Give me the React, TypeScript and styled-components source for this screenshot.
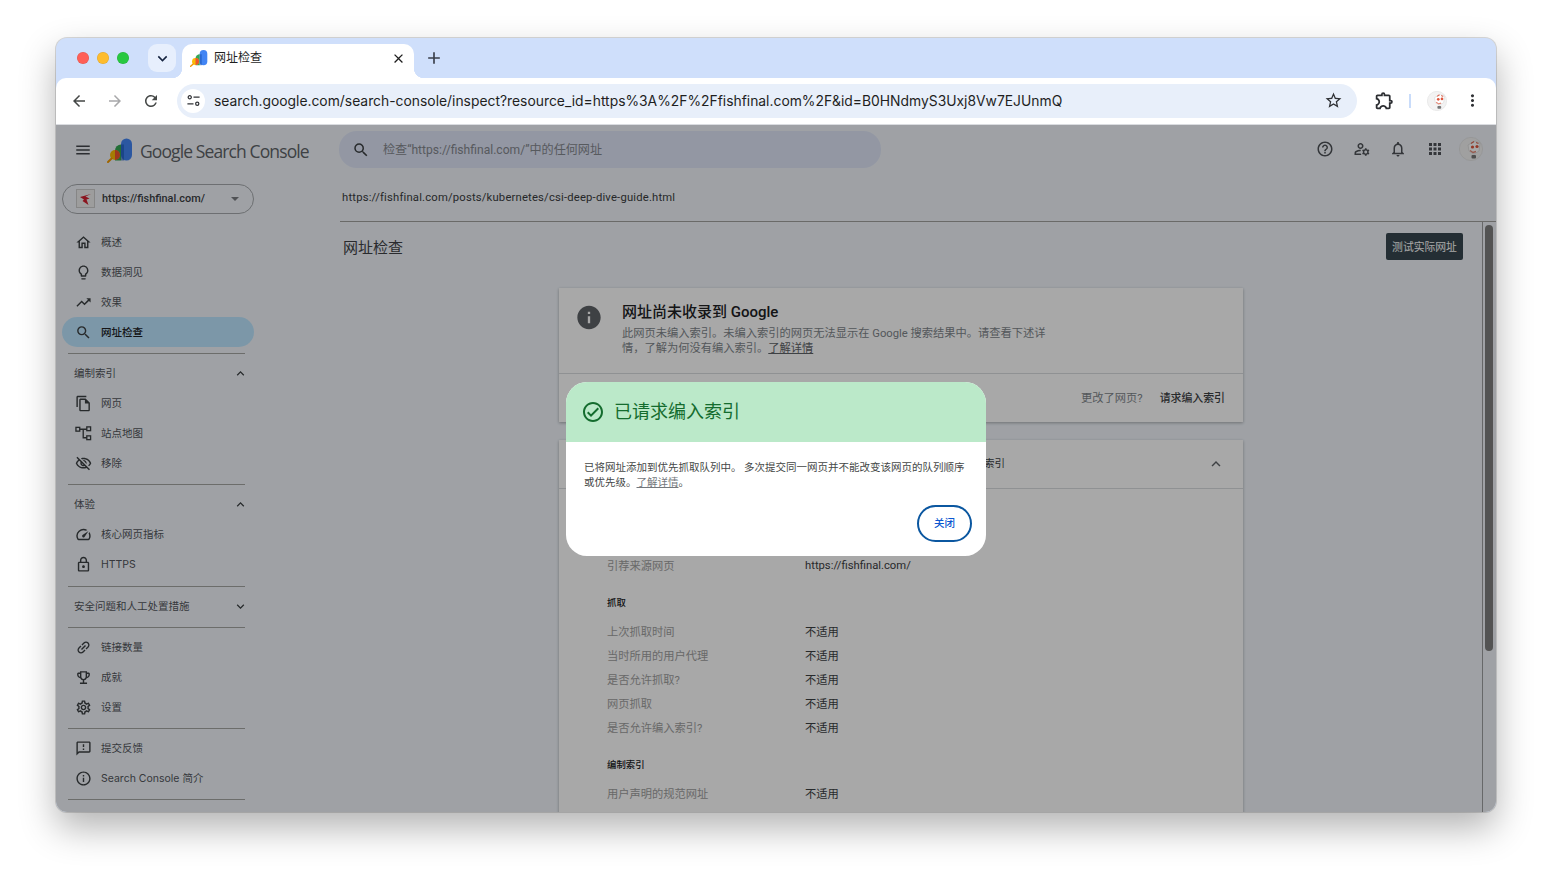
import React from 'react'
import styled, { createGlobalStyle } from 'styled-components'
import {
  MdAdd,
  MdApps,
  MdArrowBack,
  MdArrowForward,
  MdClose,
  MdExpandMore,
  MdHelpOutline,
  MdInfo,
  MdInfoOutline,
  MdKeyboardArrowDown,
  MdKeyboardArrowUp,
  MdLightbulbOutline,
  MdLink,
  MdMenu,
  MdMoreVert,
  MdOutlineCheckCircle,
  MdOutlineEmojiEvents,
  MdOutlineExtension,
  MdOutlineFeedback,
  MdOutlineFileCopy,
  MdOutlineHome,
  MdOutlineLock,
  MdOutlineManageAccounts,
  MdOutlineNotifications,
  MdOutlineSettings,
  MdOutlineSpeed,
  MdOutlineVisibilityOff,
  MdRefresh,
  MdSearch,
  MdStarBorder,
  MdTrendingUp,
} from 'react-icons/md'

const cjk = '"Roboto", "Noto Sans CJK SC", sans-serif'
const uiFont = '"Inter", "Noto Sans CJK SC", sans-serif'

const GlobalStyle = createGlobalStyle`
  html, body {
    margin: 0;
    padding: 0;
    height: 100%;
    background: #ffffff;
    overflow: hidden;
  }
  * { box-sizing: border-box; }
`

const Desktop = styled.div`
  width: 1552px;
  height: 886px;
  padding: 38px 56px 74px;
  background: #fff;
`

const Browser = styled.div`
  width: 1440px;
  height: 774px;
  display: flex;
  flex-direction: column;
  overflow: hidden;
  border-radius: 11px;
  background: #cfdffb;
  box-shadow: 0 0 0 1px rgba(0, 0, 0, 0.14), 0 16px 36px rgba(0, 0, 0, 0.3);
`

const TabStrip = styled.div`
  height: 40px;
  flex: none;
  display: flex;
  align-items: flex-end;
  padding-left: 21px;
`

const Lights = styled.div`
  display: flex;
  gap: 8px;
  align-self: flex-start;
  margin-top: 14px;
`

const Light = styled.span<{ $color: string }>`
  width: 12px;
  height: 12px;
  border-radius: 50%;
  background: ${p => p.$color};
  box-shadow: inset 0 0 0 0.5px rgba(0, 0, 0, 0.12);
`

const TabListButton = styled.div`
  width: 28px;
  height: 28px;
  margin: 0 6px 6px 19px;
  border-radius: 9px;
  background: #e7effd;
  color: #15233f;
  display: flex;
  align-items: center;
  justify-content: center;
  font-size: 19px;
`

const Tab = styled.div`
  position: relative;
  width: 232px;
  height: 34px;
  display: flex;
  align-items: center;
  padding: 0 8px 6px 8px;
  background: #fff;
  border-radius: 10px 10px 0 0;
  color: #1f1f1f;
  font: 12px/16px ${uiFont};

  &::before,
  &::after {
    content: '';
    position: absolute;
    bottom: 0;
    width: 10px;
    height: 10px;
  }
  &::before {
    left: -10px;
    background: radial-gradient(circle at 0 0, transparent 10px, #fff 10.5px);
  }
  &::after {
    right: -10px;
    background: radial-gradient(circle at 100% 0, transparent 10px, #fff 10.5px);
  }
`

const TabTitle = styled.span`
  flex: 1;
  margin-left: 6px;
`

const TabClose = styled.span`
  display: flex;
  color: #1f1f1f;
  font-size: 15px;
`

const NewTab = styled.div`
  margin: 0 0 10px 10px;
  display: flex;
  color: #3a3f4a;
  font-size: 20px;
`

const Toolbar = styled.div`
  position: relative;
  height: 47px;
  flex: none;
  display: flex;
  align-items: center;
  padding: 0 0 1px 14px;
  background: #fff;
  border-bottom: 1px solid #dadce0;
  border-radius: 10px 10px 0 0;
`

const NavButton = styled.span<{ $dim?: boolean }>`
  width: 18px;
  margin-right: 18px;
  display: flex;
  justify-content: center;
  color: ${p => (p.$dim ? '#a8a8aa' : '#444746')};
  font-size: 18px;
`

const Omnibox = styled.div`
  width: 1180px;
  height: 34px;
  margin-left: -1px;
  display: flex;
  align-items: center;
  padding: 0 14px 0 1px;
  border-radius: 17px;
  background: #e8effa;
`

const SiteInfo = styled.span`
  width: 24px;
  height: 24px;
  margin-left: 3px;
  border-radius: 50%;
  background: #fff;
  display: flex;
  align-items: center;
  justify-content: center;
`

const UrlText = styled.span`
  flex: 1;
  margin-left: 9px;
  color: #1f1f1f;
  font: 13.87px ${uiFont};
  white-space: nowrap;
`

const Star = styled.span`
  display: flex;
  color: #303236;
  font-size: 19px;
`

const ToolIcon = styled.span`
  margin-left: 17px;
  display: flex;
  color: #2b2d31;
  font-size: 21px;
`

const ToolSep = styled.span`
  width: 2px;
  height: 14px;
  margin: 0 16px 0 14px;
  background: #c9dcfa;
`

const MenuIcon = styled.span`
  margin-left: 16px;
  display: flex;
  color: #303236;
  font-size: 19px;
`

const Content = styled.div`
  position: relative;
  flex: 1;
  min-height: 0;
  display: flex;
  flex-direction: column;
  background: #f1f5fb;
  overflow: hidden;
`

const TopBar = styled.header`
  height: 50px;
  flex: none;
  display: flex;
  align-items: center;
  padding: 0 0 1px 18px;
`

const Burger = styled.span`
  display: flex;
  color: #43474c;
  font-size: 18px;
`

const Logo = styled.span`
  width: 26px;
  height: 26px;
  margin-left: 15px;
  flex: none;
`

const Brand = styled.span`
  width: 199px;
  margin-left: 7px;
  padding-top: 5px;
  color: #5f6368;
  font: 17.5px/1 "Open Sans", sans-serif;
  letter-spacing: -0.89px;
  white-space: nowrap;
`

const SearchBar = styled.div`
  width: 542px;
  height: 37px;
  display: flex;
  align-items: center;
  padding-left: 13px;
  border-radius: 18px;
  background: #dfe6f8;
`

const SearchGlyph = styled.span`
  display: flex;
  color: #3c4043;
  font-size: 18px;
`

const SearchHint = styled.span`
  margin-left: 13px;
  color: #85898f;
  font: 12.1px/16px ${cjk};
`

const TopIcons = styled.div`
  margin-left: auto;
  display: flex;
  align-items: center;
  padding: 0 13px 1px 0;
`

const TopIcon = styled.span`
  width: 36.5px;
  display: flex;
  justify-content: center;
  color: #4f5358;
  font-size: 18px;
`

const AvatarFrame = styled.span<{ $size: number }>`
  width: ${p => p.$size}px;
  height: ${p => p.$size}px;
  display: block;
  flex: none;
  margin-left: ${p => (p.$size > 22 ? 6 : 0)}px;
`

const Body = styled.div`
  flex: 1;
  min-height: 0;
  display: flex;
`

const Sidebar = styled.nav`
  width: 284px;
  flex: none;
  padding: 9px 0 0 6px;
`

const PropertySelect = styled.div`
  width: 192px;
  height: 30px;
  display: flex;
  align-items: center;
  padding: 0 0 1px 13px;
  border: 1px solid #a6a9ad;
  border-radius: 15px;
  margin-bottom: 13px;
`

const SiteMark = styled.svg`
  width: 19px;
  height: 19px;
  flex: none;
`

const SiteName = styled.span`
  flex: 1;
  margin-left: 7px;
  color: #3c4043;
  font: 500 10.9px ${cjk};
`

const Caret = styled.span`
  width: 0;
  height: 0;
  margin: 1px 14px 0 0;
  border-left: 4px solid transparent;
  border-right: 4px solid transparent;
  border-top: 4px solid #7a7d82;
`

const NavRow = styled.div<{ $active?: boolean }>`
  width: 192px;
  height: 30px;
  display: flex;
  align-items: center;
  padding-left: 12px;
  border-radius: 15px;
  background: ${p => (p.$active ? '#bde6ff' : 'transparent')};
  color: ${p => (p.$active ? '#202124' : '#53565b')};
  font: ${p => (p.$active ? 500 : 400)} 10.5px/14px ${uiFont};
`

const NavIcon = styled.span`
  width: 18px;
  flex: none;
  display: flex;
  justify-content: center;
  margin-right: 9px;
  font-size: 17px;
  color: #3c4043;
`

const NavLabel = styled.span`
  padding-top: 2px;
`

const NavRule = styled.div<{ $wide?: boolean }>`
  width: 177px;
  height: 1px;
  margin: ${p => (p.$wide ? 7 : 6)}px 0 4px 6px;
  background: #a5a6a3;
`

const NavHeading = styled.div`
  width: 192px;
  height: 30px;
  display: flex;
  align-items: center;
  justify-content: space-between;
  padding: 0 6px 0 12px;
  color: #53565b;
  font: 10.5px/14px ${uiFont};

  svg {
    font-size: 15px;
    color: #3c4043;
  }
`

const Main = styled.main`
  flex: 1;
  min-width: 0;
  display: flex;
  flex-direction: column;
`

const Crumb = styled.div`
  height: 47px;
  flex: none;
  padding: 16px 0 0 2px;
  border-bottom: 1px solid #a1a29f;
  color: #3a3c40;
  font: 11.25px/14px ${cjk};
  letter-spacing: 0.19px;
`

const ScrollArea = styled.div`
  flex: 1;
  min-height: 0;
  display: flex;
`

const Page = styled.div`
  flex: 1;
  min-width: 0;
  overflow: hidden;
`

const TitleRow = styled.div`
  display: flex;
  align-items: center;
  justify-content: space-between;
  padding: 11px 19px 0 3px;
`

const PageTitle = styled.h1`
  margin: 0;
  color: #404246;
  font: 400 15px ${cjk};
`

const LiveTest = styled.button`
  width: 77px;
  height: 27px;
  padding: 0 0 2px;
  border: none;
  border-radius: 2px;
  background: #38474f;
  color: #fff;
  font: 10.8px ${cjk};
`

const Card = styled.section<{ $gap: number }>`
  width: 684px;
  margin: ${p => p.$gap}px 0 0 219px;
  background: #fff;
  box-shadow: 0 1px 3px rgba(0, 0, 0, 0.3);
`

const VerdictTop = styled.div`
  height: 86px;
  display: flex;
  padding: 14px 0 0 17px;
  border-bottom: 1px solid #dadce0;
`

const VerdictIcon = styled.span`
  width: 28px;
  margin: 0 19px 0 -1px;
  flex: none;
  display: flex;
  height: 30px;
  color: #5f6368;
  font-size: 31px;
`

const VerdictText = styled.div`
  width: 430px;
`

const VerdictTitle = styled.h2`
  margin: 0 0 4px;
  color: #202124;
  font: 500 15px/20px ${cjk};
`

const VerdictDesc = styled.p`
  margin: 0;
  color: #80868b;
  font: 11.25px/15px ${cjk};

  a {
    color: #5f6368;
    text-decoration: underline;
  }
`

const VerdictActions = styled.div`
  height: 48px;
  display: flex;
  align-items: center;
  justify-content: flex-end;
  gap: 17px;
  padding: 0 18px 2px 0;
  color: #80868b;
  font: 11.25px ${cjk};

  strong {
    color: #3c4043;
    font-weight: 500;
    font-size: 10.9px;
  }
`

const DetailHead = styled.div`
  height: 49px;
  display: flex;
  align-items: center;
  justify-content: space-between;
  padding-right: 18px;
  border-bottom: 1px solid #dadce0;
  color: #3c4043;
  font: 10.5px ${cjk};

  span {
    width: 446px;
    padding-bottom: 3px;
    text-align: right;
  }
  svg {
    font-size: 18px;
    color: #5f6368;
  }
`

const DetailBody = styled.div`
  padding: 10px 0 40px 48px;
`

const DetailSection = styled.div`
  margin-bottom: 12px;
`

const DetailLabel = styled.h3`
  height: 26px;
  margin: 0 0 4px;
  padding-top: 1px;
  color: #202124;
  font: 500 9.4px/26px ${cjk};
`

const DetailRow = styled.div`
  height: 24px;
  display: flex;
  align-items: center;
  font: 11.25px ${cjk};
`

const RowKey = styled.span`
  width: 198px;
  color: #9e9e9e;
`

const RowValue = styled.span`
  color: #3c4043;
`

const ScrollTrack = styled.div`
  width: 14px;
  flex: none;
  padding: 3px 3px 0 2px;
  border-left: 1px solid #9d9ea0;
`

const ScrollThumb = styled.div`
  height: 426px;
  border-radius: 4px;
  background: #7f7f7f;
`

const Scrim = styled.div`
  position: absolute;
  inset: 0;
  display: flex;
  align-items: center;
  justify-content: center;
  background: rgba(0, 0, 0, 0.34);
`

const Dialog = styled.div`
  width: 420px;
  height: 174px;
  display: flex;
  flex-direction: column;
  border-radius: 21px;
  overflow: hidden;
  background: #fff;
  font-family: ${cjk};
`

const DialogHead = styled.div`
  height: 60px;
  flex: none;
  display: flex;
  align-items: center;
  padding-left: 15px;
  background: #bbe9c9;
  color: #146c2e;
  font-size: 18px;
  line-height: 24px;

  svg {
    font-size: 24px;
    margin-right: 9px;
  }
`

const DialogBody = styled.p`
  margin: 18px 18px 0;
  color: #444746;
  font-size: 10.5px;
  line-height: 15px;

  a {
    color: #73777b;
    text-decoration: underline;
  }
`

const DialogActions = styled.div`
  margin-top: auto;
  display: flex;
  justify-content: flex-end;
  padding: 0 14px 14px 0;
`

const CloseButton = styled.button`
  width: 55px;
  height: 37px;
  padding: 0 0 2px;
  border: 2px solid #0b57a0;
  border-radius: 19px;
  background: #fff;
  color: #0b57d0;
  font: 500 10.5px ${cjk};
`

// no icon package has the Search Console logo, drawn from the zoomed crop
const GscLogo = () => (
  <svg viewBox="0 0 26 26" width="100%" height="100%">
    <rect x="14" y="1.5" width="11" height="22" rx="5.5" fill="#4285f4" />
    <path d="M14 7.5a6 6 0 0 0-6 6v10h6z" fill="#34a853" />
    <path d="M14 7.5h3v16h-3z" fill="#1a56b8" opacity="0.6" />
    <circle cx="8" cy="18" r="5" fill="#fbbc04" />
    <path d="M8 13a5 5 0 0 1 0 10z" fill="#ea4335" opacity="0.85" />
    <path d="M4.6 21.6 1 25" stroke="#f29900" strokeWidth="2" strokeLinecap="round" />
  </svg>
)

const CatAvatar = () => (
  <svg viewBox="0 0 24 24" width="100%" height="100%">
    <circle cx="12" cy="12" r="11.6" fill="#f3f3f3" stroke="#dcdcdc" strokeWidth="0.6" />
    <path d="M9 8l7-4 5 2-1 8-5 3-5-3z" fill="#fff" stroke="#c9c9c9" strokeWidth="0.5" />
    <circle cx="13.5" cy="10" r="1.6" fill="#e0553c" />
    <circle cx="18" cy="9.5" r="1.6" fill="#e0553c" />
    <path d="M12 6.5l3-2M17 5.5l2.5 1" stroke="#d96a55" strokeWidth="1.3" />
    <path d="M11 13.5l3 2 3-1" stroke="#e58a78" strokeWidth="1.4" fill="none" />
    <rect x="12.5" y="18" width="4.5" height="3.4" rx="1" fill="#777" />
  </svg>
)

const SiteInfoGlyph = () => (
  <svg viewBox="0 0 16 16" width="15" height="15" fill="none" stroke="#303236" strokeWidth="1.3">
    <circle cx="4" cy="4.5" r="1.7" />
    <path d="M8 4.5h6.5M1.5 11.5h6.5" />
    <circle cx="12" cy="11.5" r="1.7" />
  </svg>
)

const SitemapIcon = () => (
  <svg viewBox="0 0 18 18" width="17" height="17" fill="none" stroke="currentColor" strokeWidth="1.4">
    <rect x="1" y="2.5" width="4" height="4" />
    <rect x="12.5" y="2" width="4" height="4" />
    <rect x="12.5" y="11.5" width="4" height="4" />
    <path d="M5 4.5h7.5M8.7 4.5v9h3.8" />
  </svg>
)

const primaryNav = [
  { icon: <MdOutlineHome />, label: '概述' },
  { icon: <MdLightbulbOutline />, label: '数据洞见' },
  { icon: <MdTrendingUp />, label: '效果' },
  { icon: <MdSearch />, label: '网址检查', active: true },
]

const indexNav = [
  { icon: <MdOutlineFileCopy />, label: '网页' },
  { icon: <SitemapIcon />, label: '站点地图' },
  { icon: <MdOutlineVisibilityOff />, label: '移除' },
]

const experienceNav = [
  { icon: <MdOutlineSpeed />, label: '核心网页指标' },
  { icon: <MdOutlineLock />, label: 'HTTPS' },
]

const toolNav = [
  { icon: <MdLink style={{ transform: 'rotate(-45deg)' }} />, label: '链接数量' },
  { icon: <MdOutlineEmojiEvents />, label: '成就' },
  { icon: <MdOutlineSettings />, label: '设置' },
]

const helpNav = [
  { icon: <MdOutlineFeedback />, label: '提交反馈' },
  { icon: <MdInfoOutline />, label: 'Search Console 简介' },
]

type NavItem = { icon: React.ReactNode; label: string; active?: boolean }

const NavList = ({ items }: { items: NavItem[] }) => (
  <>
    {items.map(item => (
      <NavRow key={item.label} $active={item.active}>
        <NavIcon>{item.icon}</NavIcon>
        <NavLabel>{item.label}</NavLabel>
      </NavRow>
    ))}
  </>
)

const detailSections = [
  { title: '发现', rows: [['站点地图', '不适用'], ['引荐来源网页', 'https://fishfinal.com/']] },
  {
    title: '抓取',
    rows: [
      ['上次抓取时间', '不适用'],
      ['当时所用的用户代理', '不适用'],
      ['是否允许抓取?', '不适用'],
      ['网页抓取', '不适用'],
      ['是否允许编入索引?', '不适用'],
    ],
  },
  { title: '编制索引', rows: [['用户声明的规范网址', '不适用']] },
]

export default function App() {
  return (
    <Desktop>
      <GlobalStyle />
      <Browser>
        <TabStrip>
          <Lights>
            <Light $color="#ff5f57" />
            <Light $color="#febc2e" />
            <Light $color="#28c840" />
          </Lights>
          <TabListButton>
            <MdExpandMore />
          </TabListButton>
          <Tab>
            <AvatarFrame $size={18}>
              <GscLogo />
            </AvatarFrame>
            <TabTitle>网址检查</TabTitle>
            <TabClose>
              <MdClose />
            </TabClose>
          </Tab>
          <NewTab>
            <MdAdd />
          </NewTab>
        </TabStrip>
        <Toolbar>
          <NavButton>
            <MdArrowBack />
          </NavButton>
          <NavButton $dim>
            <MdArrowForward />
          </NavButton>
          <NavButton>
            <MdRefresh />
          </NavButton>
          <Omnibox>
            <SiteInfo>
              <SiteInfoGlyph />
            </SiteInfo>
            <UrlText>search.google.com/search-console/inspect?resource_id=https%3A%2F%2Ffishfinal.com%2F&amp;id=B0HNdmyS3Uxj8Vw7EJUnmQ</UrlText>
            <Star>
              <MdStarBorder />
            </Star>
          </Omnibox>
          <ToolIcon>
            <MdOutlineExtension />
          </ToolIcon>
          <ToolSep />
          <AvatarFrame $size={20}>
            <CatAvatar />
          </AvatarFrame>
          <MenuIcon>
            <MdMoreVert />
          </MenuIcon>
        </Toolbar>
        <Content>
          <TopBar>
            <Burger>
              <MdMenu />
            </Burger>
            <Logo>
              <GscLogo />
            </Logo>
            <Brand>Google Search Console</Brand>
            <SearchBar>
              <SearchGlyph>
                <MdSearch />
              </SearchGlyph>
              <SearchHint>检查“https://fishfinal.com/”中的任何网址</SearchHint>
            </SearchBar>
            <TopIcons>
              <TopIcon>
                <MdHelpOutline />
              </TopIcon>
              <TopIcon>
                <MdOutlineManageAccounts />
              </TopIcon>
              <TopIcon>
                <MdOutlineNotifications />
              </TopIcon>
              <TopIcon>
                <MdApps />
              </TopIcon>
              <AvatarFrame $size={24}>
                <CatAvatar />
              </AvatarFrame>
            </TopIcons>
          </TopBar>
          <Body>
            <Sidebar>
              <PropertySelect>
                <SiteMark viewBox="0 0 19 19">
                  <rect x="0.5" y="0.5" width="18" height="18" fill="#eeeeee" stroke="#cccccc" />
                  <path d="M15 5 4 8l4 2.5-1.5 1.5 6 4-2-5.5 3-1-4-2z" fill="#d3202f" />
                </SiteMark>
                <SiteName>https://fishfinal.com/</SiteName>
                <Caret />
              </PropertySelect>
              <NavList items={primaryNav} />
              <NavRule />
              <NavHeading>
                <NavLabel>编制索引</NavLabel>
                <MdKeyboardArrowUp />
              </NavHeading>
              <NavList items={indexNav} />
              <NavRule />
              <NavHeading>
                <NavLabel>体验</NavLabel>
                <MdKeyboardArrowUp />
              </NavHeading>
              <NavList items={experienceNav} />
              <NavRule $wide />
              <NavHeading>
                <NavLabel>安全问题和人工处置措施</NavLabel>
                <MdKeyboardArrowDown />
              </NavHeading>
              <NavRule />
              <NavList items={toolNav} />
              <NavRule />
              <NavList items={helpNav} />
              <NavRule />
              <NavHeading>
                <NavLabel>旧版工具和报告</NavLabel>
              </NavHeading>
            </Sidebar>
            <Main>
              <Crumb>https://fishfinal.com/posts/kubernetes/csi-deep-dive-guide.html</Crumb>
              <ScrollArea>
                <Page>
                  <TitleRow>
                    <PageTitle>网址检查</PageTitle>
                    <LiveTest>测试实际网址</LiveTest>
                  </TitleRow>
                  <Card $gap={28}>
                    <VerdictTop>
                      <VerdictIcon>
                        <MdInfo />
                      </VerdictIcon>
                      <VerdictText>
                        <VerdictTitle>网址尚未收录到 Google</VerdictTitle>
                        <VerdictDesc>
                          此网页未编入索引。未编入索引的网页无法显示在 Google 搜索结果中。请查看下述详情，了解为何没有编入索引。<a>了解详情</a>
                        </VerdictDesc>
                      </VerdictText>
                    </VerdictTop>
                    <VerdictActions>
                      更改了网页?
                      <strong>请求编入索引</strong>
                    </VerdictActions>
                  </Card>
                  <Card $gap={18}>
                    <DetailHead>
                      <span>网页未编入索引</span>
                      <MdKeyboardArrowUp />
                    </DetailHead>
                    <DetailBody>
                      {detailSections.map(section => (
                        <DetailSection key={section.title}>
                          <DetailLabel>{section.title}</DetailLabel>
                          {section.rows.map(([key, value]) => (
                            <DetailRow key={key}>
                              <RowKey>{key}</RowKey>
                              <RowValue>{value}</RowValue>
                            </DetailRow>
                          ))}
                        </DetailSection>
                      ))}
                    </DetailBody>
                  </Card>
                </Page>
                <ScrollTrack>
                  <ScrollThumb />
                </ScrollTrack>
              </ScrollArea>
            </Main>
          </Body>
          <Scrim>
            <Dialog>
              <DialogHead>
                <MdOutlineCheckCircle />
                <span>已请求编入索引</span>
              </DialogHead>
              <DialogBody>
                已将网址添加到优先抓取队列中。 多次提交同一网页并不能改变该网页的队列顺序或优先级。<a>了解详情</a>。
              </DialogBody>
              <DialogActions>
                <CloseButton>关闭</CloseButton>
              </DialogActions>
            </Dialog>
          </Scrim>
        </Content>
      </Browser>
    </Desktop>
  )
}
